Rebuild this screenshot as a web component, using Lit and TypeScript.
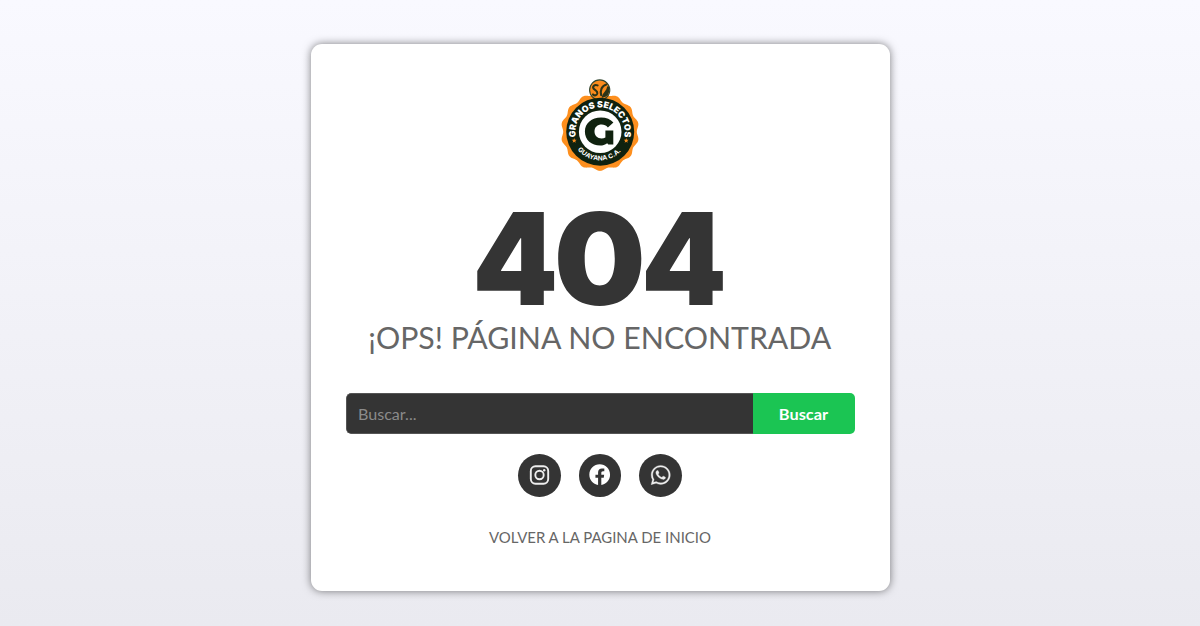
import { LitElement, html, css, svg } from "lit";
import { customElement } from "lit/decorators.js";

const CX = 50;
const CY = 61.7;

// Outline of the badge: a circle whose radius swells into rounded bumps.
function scallop(bumps: number, radius: number, swell: number): string {
  const pts: string[] = [];
  for (let i = 0; i < 360; i++) {
    const a = (i * Math.PI) / 180;
    const r = radius + swell * Math.cos(bumps * (a - Math.PI / 2));
    pts.push(`${(CX + r * Math.cos(a)).toFixed(2)} ${(CY + r * Math.sin(a)).toFixed(2)}`);
  }
  return `M${pts.join("L")}Z`;
}

function star(x: number, y: number, r: number): string {
  const pts: string[] = [];
  for (let i = 0; i < 10; i++) {
    const a = (i * Math.PI) / 5 - Math.PI / 2;
    const k = i % 2 ? r * 0.42 : r;
    pts.push(`${(x + k * Math.cos(a)).toFixed(2)},${(y + k * Math.sin(a)).toFixed(2)}`);
  }
  return pts.join(" ");
}

@customElement("brand-badge")
export class BrandBadge extends LitElement {
  static styles = css`
    :host { display: block; height: 110px; }
    svg { display: block; }
    text { font-family: "Inter", "Liberation Sans", sans-serif; fill: #fff; }
    .name { font-size: 8.8px; font-weight: 900; }
    .place { font-size: 6.4px; font-weight: 700; }
  `;
  render() {
    return html`<svg width="100" height="110" viewBox="0 0 100 110">
      <defs>
        <path id="upper" d="M25.9 67 A24.6 24.6 0 1 1 74.1 67" />
        <path id="lower" d="M22.2 68.5 A28.6 28.6 0 0 0 77.8 68.5" />
      </defs>
      <path d=${scallop(14, 38, 1.2)} fill="#fd8f1e" />
      <circle cx="49.7" cy="20" r="10.1" fill="#fb8b1c" stroke="#31462f" stroke-width="1.1" />
      <circle cx="50.2" cy="61.7" r="34" fill="#10220f" />
      <g fill="none" stroke="#2c3417" stroke-width="2.1" stroke-linecap="round">
        <path d="M47.6 15.4C44.5 14 42.2 16.5 43.6 18.6C44.8 20.4 47.8 20.4 47.3 23.4C46.9 25.4 44.6 26 43 24.4" />
        <path d="M56.4 14.4C51.6 15.6 50 20.6 51.2 25.2" />
        <path d="M58 17.4C57.8 21.6 54 22.4 53 26.6C56.6 25.6 58.4 22.4 58.2 19" />
      </g>
      <circle cx="50.2" cy="61.7" r="21.3" fill="#fff" />
      <path d="M63.4 52.6L57.9 57.5C56.1 55.5 54.1 54.6 51.8 54.6C47.4 54.6 44.5 57.3 44.5 61.5C44.5 65.7 47.4 68.4 51.6 68.4C53 68.4 54.2 68.1 55.4 67.5V60.4H63.3V74.4H58.3L57.2 73.2C55.1 74.8 52.7 75.5 50.3 75.5C41.4 75.5 34.9 69.8 34.9 61.4C34.9 53.1 41.5 47.4 51.1 47.4C56.3 47.4 60.7 49.2 63.4 52.6Z" fill="#10220f" />
      <text class="name"><textPath href="#upper" textLength="87" lengthAdjust="spacingAndGlyphs">GRANOS SELECTOS</textPath></text>
      <text class="place"><textPath href="#lower" startOffset="12.5" textLength="49" lengthAdjust="spacingAndGlyphs">GUAYANA C.A.</textPath></text>
      ${[24.2, 76.2].map((x) => svg`<polygon points=${star(x, 70.6, 2.6)} fill="#fb8b1c" />`)}
    </svg>`;
  }
}

@customElement("app-root")
export class AppRoot extends LitElement {
  static styles = css`
    :host {
      display: flex; justify-content: center; align-items: flex-start;
      box-sizing: border-box; height: 626px; padding-top: 44px; overflow: hidden;
      background: linear-gradient(#f9f9ff, #eaeaf0);
      font-family: "Lato", "Liberation Sans", sans-serif;
    }
    .card {
      display: flex; flex-direction: column; align-items: center;
      box-sizing: border-box; width: 579px; height: 547px; padding-top: 26px; margin-left: 1px;
      background: #fff; border-radius: 11px;
      box-shadow: 0 0 9px rgba(0, 0, 0, 0.5);
    }
    svg { display: block; flex: none; overflow: visible; }
    brand-badge { margin-right: 1px; }
    .code { margin-top: 15px; margin-right: 1px; }
    .code text { font: 900 128px "Inter", sans-serif; fill: #343434; }
    .title { margin-right: 1px; }
    .title text { font-size: 30.2px; fill: #666; }
    .search { display: flex; width: 509px; height: 41px; margin-top: 28px; border-radius: 5px; overflow: hidden; margin-right: 1px; }
    .field { flex: 1; box-sizing: border-box; border: solid #555; border-width: 1px 0 1px 1px; border-radius: 5px 0 0 5px; background: #343434; }
    .field text { font-size: 14.6px; fill: #8b8b8b; }
    .submit { width: 102px; background: #1bc553; }
    .submit text { font-size: 15.4px; font-weight: 700; fill: #fff; }
    .social { display: flex; gap: 18px; margin-top: 20px; margin-right: 1px; }
    .round { display: grid; place-items: center; box-sizing: border-box; width: 42.6px; height: 43px; padding-bottom: 1px; border-radius: 50%; background: #343434; }
    .back { margin-top: 23px; margin-right: 1px; }
    .back text { font-size: 14.5px; fill: #666; }
  `;
  render() {
    return html`<main class="card">
      <brand-badge></brand-badge>
      <svg class="code" width="280" height="120" viewBox="460 195 280 120">
        <text y="305"><tspan x="472.2" textLength="86" lengthAdjust="spacingAndGlyphs">4</tspan><tspan x="553.7" textLength="92" lengthAdjust="spacingAndGlyphs">0</tspan><tspan x="641" textLength="86" lengthAdjust="spacingAndGlyphs">4</tspan></text>
      </svg>
      <svg class="title" width="500" height="50" viewBox="350 315 500 50">
        <text x="368.3" y="348.7" textLength="463" lengthAdjust="spacingAndGlyphs">¡OPS! PÁGINA NO ENCONTRADA</text>
      </svg>
      <div class="search">
        <div class="field">
          <svg width="100" height="39"><text x="11" y="25.8" textLength="58.5" lengthAdjust="spacingAndGlyphs">Buscar...</text></svg>
        </div>
        <div class="submit">
          <svg width="101" height="41"><text x="25.8" y="26.6" textLength="49.3" lengthAdjust="spacingAndGlyphs">Buscar</text></svg>
        </div>
      </div>
      <div class="social">
        <div class="round">
          <svg width="22" height="22" viewBox="0 0 22 22" fill="none" stroke="#eee">
            <rect x="2.8" y="2.3" width="17.4" height="17.4" rx="4.6" stroke-width="1.9" />
            <circle cx="11.5" cy="11" r="4.2" stroke-width="1.9" />
            <circle cx="16.2" cy="6.3" r="1.2" fill="#eee" stroke="none" />
          </svg>
        </div>
        <div class="round">
          <svg width="21.4" height="21.4" viewBox="0 0 512 512">
            <path fill="#fff" d="M504 256C504 119 393 8 256 8S8 119 8 256c0 123.78 90.69 226.38 209.25 245V327.69h-63V256h63v-54.64c0-62.15 37-96.48 93.67-96.48 27.14 0 55.52 4.84 55.52 4.84v61h-31.28c-30.8 0-40.41 19.12-40.41 38.73V256h68.78l-11 71.69h-57.78V501C413.31 482.38 504 379.78 504 256z" />
          </svg>
        </div>
        <div class="round">
          <svg width="19.4" height="22" viewBox="0 0 448 512">
            <path fill="#eee" stroke="#eee" stroke-width="6" d="M380.9 97.1C339 55.1 283.2 32 223.9 32c-122.4 0-222 99.6-222 222 0 39.1 10.2 77.3 29.6 111L0 480l117.7-30.9c32.4 17.7 68.9 27 106.1 27h.1c122.3 0 224.1-99.6 224.1-222 0-59.3-25.2-115-67.1-157zm-157 341.6c-33.2 0-65.7-8.9-94-25.7l-6.7-4-69.8 18.3L72 359.2l-4.4-7c-18.5-29.4-28.2-63.3-28.2-98.2 0-101.7 82.8-184.5 184.6-184.5 49.3 0 95.6 19.2 130.4 54.1 34.8 34.9 56.2 81.2 56.1 130.5 0 101.8-84.9 184.6-186.6 184.6zm101.200-138.200c-5.500-2.800-32.800-16.200-37.900-18-5.100-1.900-8.800-2.800-12.500 2.800-3.700 5.600-14.300 18-17.600 21.800-3.200 3.700-6.500 4.200-12 1.400-32.600-16.300-54-29.100-75.500-66-5.700-9.800 5.700-9.100 16.300-30.300 1.800-3.700.9-6.900-.5-9.700-1.400-2.800-12.500-30.100-17.100-41.200-4.500-10.800-9.100-9.300-12.500-9.500-3.200-.2-6.900-.2-10.600-.2-3.700 0-9.700 1.400-14.800 6.900-5.100 5.600-19.400 19-19.400 46.300 0 27.300 19.900 53.700 22.600 57.400 2.800 3.700 39.100 59.700 94.800 83.800 35.200 15.200 49 16.500 66.600 13.900 10.700-1.600 32.800-13.400 37.400-26.400 4.600-13 4.600-24.100 3.200-26.400-1.300-2.500-5-3.900-10.500-6.600z" />
          </svg>
        </div>
      </div>
      <svg class="back" width="240" height="35" viewBox="480 520 240 35">
        <text x="489" y="542.8" textLength="222" lengthAdjust="spacingAndGlyphs">VOLVER A LA PAGINA DE INICIO</text>
      </svg>
    </main>`;
  }
}
